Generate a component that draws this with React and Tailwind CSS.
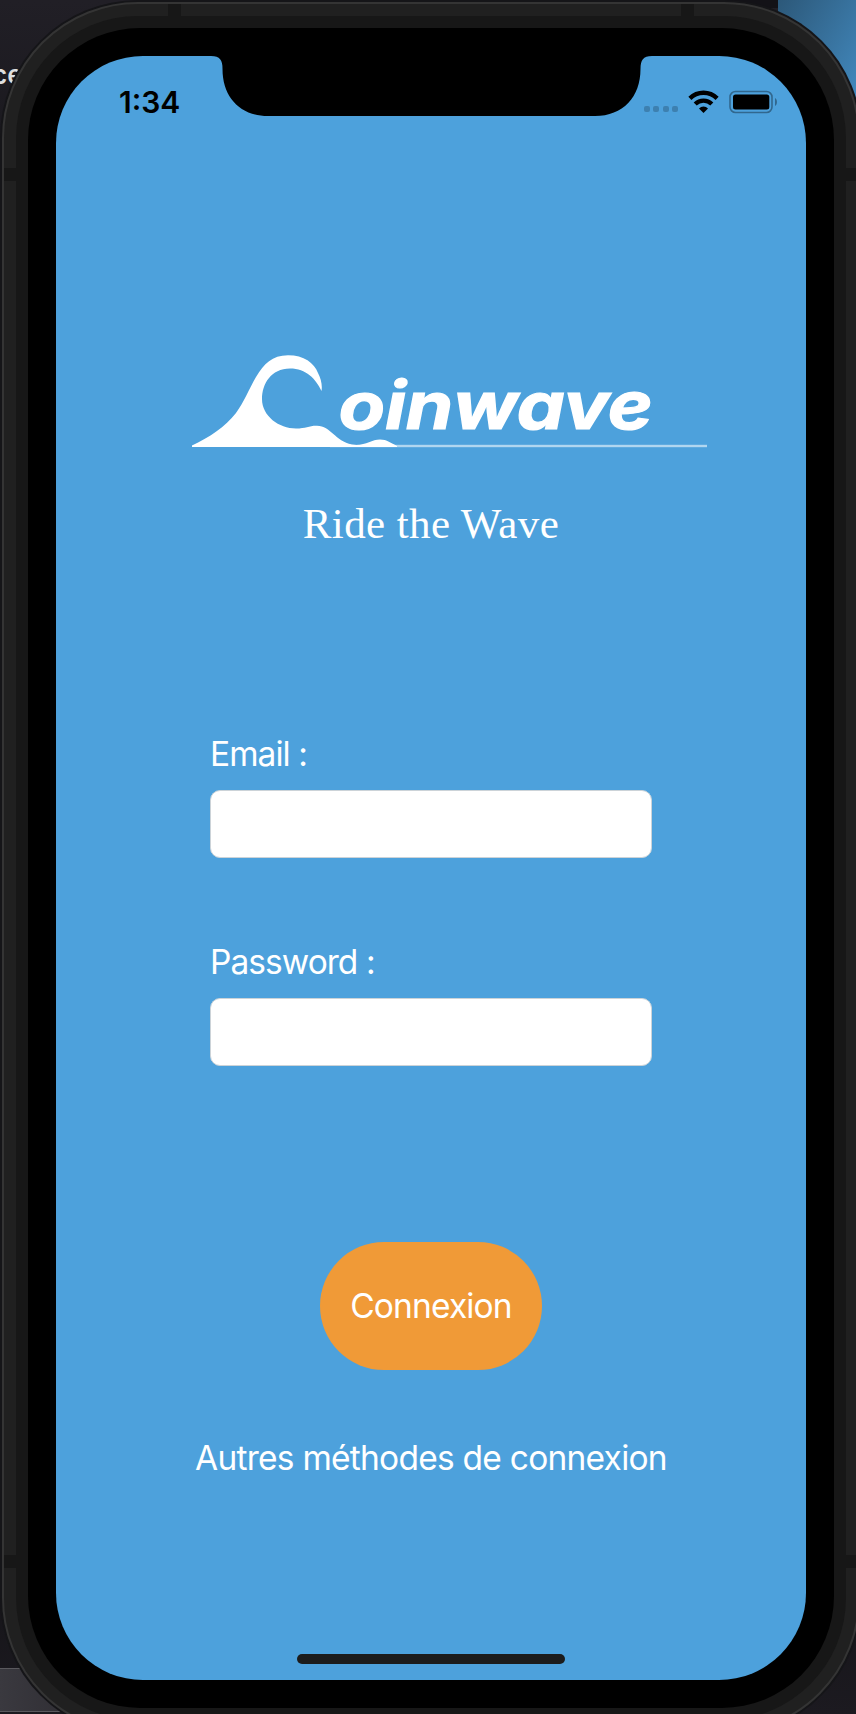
const uiFont = "font-['Inter','Liberation_Sans',sans-serif]";

function Desktop() {
  return (
    <div className="absolute inset-0 flex flex-col justify-between overflow-hidden bg-[#141317]" aria-hidden="true">
      <div className="flex h-[294px]">
        <div className="w-[778px] bg-linear-to-b from-[#211f26] to-[#141317]">
          <div className="ml-[240px] h-2 bg-[#131217]" />
          <p className={`${uiFont} -ml-[8px] mt-[49px] text-[26px] leading-[36px] font-semibold text-[#dedede]`}>
            ce
          </p>
          <div className="mt-[66px] flex w-[2px] flex-col gap-8">
            <div className="h-3 bg-[#5b5b5b]" />
            <div className="h-3 bg-[#5b5b5b]" />
            <div className="h-3 bg-[#4a4a4a]" />
          </div>
        </div>
        <div className="h-[130px] flex-1 bg-linear-to-br from-[#2c5879] to-[#4590c8]" />
      </div>
      <div className="mb-auto flex w-[2px] flex-col">
        <div className="h-[66px] border-y-2 border-[#333]" />
        <div className="mt-[74px] h-[132px] border-y-2 border-[#333]" />
        <div className="mt-[45px] h-[134px] border-y-2 border-[#333]" />
      </div>
      <div className="flex h-[164px] flex-col justify-end bg-linear-to-b from-[#141317] to-[#1c1a20] pb-[2px]">
        <div className="h-[44px] w-[120px] border-y border-[#5a595e] bg-linear-to-r from-[#3a393f] to-[#29272d]" />
      </div>
    </div>
  );
}

function AntennaBands() {
  return (
    <>
      <div className="absolute inset-x-0 top-0 flex justify-between px-[164px]">
        <i className="h-3 w-[13px] bg-[#171717]" />
        <i className="h-3 w-[13px] bg-[#171717]" />
      </div>
      <div className="absolute inset-0 flex justify-between py-[164px]">
        <div className="flex flex-col justify-between">
          <i className="h-[13px] w-3 bg-[#171717]" />
          <i className="h-[13px] w-3 bg-[#171717]" />
        </div>
        <div className="flex flex-col justify-between">
          <i className="h-[13px] w-3 bg-[#171717]" />
          <i className="h-[13px] w-3 bg-[#171717]" />
        </div>
      </div>
    </>
  );
}

function StatusBar() {
  return (
    <header className="flex h-[92px] justify-between pl-[63px] pr-[28px] pt-[31px]">
      <span className={`${uiFont} text-[30px] leading-[30px] font-semibold text-black`}>1:34</span>
      <div className="flex items-start pt-[3px]">
        <div className="mr-[10px] mt-[16px] flex gap-[3.4px]">
          <i className="size-[6px] rounded-[2px] bg-[#3d80b0]" />
          <i className="size-[6px] rounded-[2px] bg-[#3d80b0]" />
          <i className="size-[6px] rounded-[2px] bg-[#3d80b0]" />
          <i className="size-[6px] rounded-[2px] bg-[#3d80b0]" />
        </div>
        <svg className="mr-[10px]" width="31" height="24" viewBox="0 0 31 24">
          <g fill="none" stroke="#000" strokeWidth="4.4">
            <path d="M1.900 8.300a19.500 19.500 0 0 1 27.200 0" />
            <path d="M7.200 14a12 12 0 0 1 16.600 0" />
          </g>
          <path d="M11 18.400a6.400 6.400 0 0 1 9 0L15.500 23z" />
        </svg>
        <svg width="49" height="24" viewBox="0 0 49 24">
          <rect x="1" y="1.500" width="42" height="21" rx="5.5" fill="none" stroke="#31678e" strokeWidth="1.6" />
          <rect x="4" y="4.500" width="36.300" height="15" rx="2.500" />
          <path d="M46 8c2.600 1.300 2.600 6.700 0 8z" fill="#31678e" />
        </svg>
      </div>
    </header>
  );
}

function Notch() {
  return (
    <svg className="absolute left-[155px] top-0" width="441" height="60" viewBox="0 0 441 60">
      <path d="M0 0C9 0 11.500 4 11.500 13C11.500 41 29 60 57 60H384C412 60 429.500 41 429.500 13C429.500 4 432 0 441 0Z" />
    </svg>
  );
}

function Logo() {
  return (
    <svg className="ml-[134px] block" width="520" height="100" viewBox="190 352 520 100" fill="#fff">
      <rect x="330" y="444.800" width="377" height="2.400" fill="#b0d6f0" />
      <path d="M192 447V445.500C210 437 225 427 236 413C244 402 249 389 256 377C264 364 272 355.300 288 355.300C304 355.300 314 363 318 373C321 379 322.500 385 321.500 391C316 379 306 368.500 290 368.500C271 368.500 262 384 262 399C262 416 279 428.500 296 428.500C306 428.500 309 425.500 317 425.700C331 426 335 441 352 444.600C365 446.500 371 439.500 380 439.500C387 439.500 391 443 397 446V447Z" />
      <text
        x="338.500"
        y="429"
        textLength="314"
        lengthAdjust="spacingAndGlyphs"
        className="font-['Inter','Liberation_Sans',sans-serif] text-[66px] font-bold italic [font-feature-settings:'cv11']"
        stroke="#fff"
        strokeWidth="1.200"
      >
        oinwave
      </text>
    </svg>
  );
}

function Field({ label, type }) {
  return (
    <label className="block">
      <span
        className={`${uiFont} block h-[54px] text-[33.500px] leading-[36px] tracking-[-0.95px] whitespace-pre text-white`}
      >
        {label}
      </span>
      <input
        type={type}
        className="block h-[68px] w-[442px] rounded-[10px] border border-[#ccd3d8] bg-white outline-none"
      />
    </label>
  );
}

export default function App() {
  return (
    <div className="relative h-[1714px] w-[856px] overflow-hidden">
      <Desktop />
      <div className="relative ml-[2px] mt-[2px] h-[1732px] w-[858px] rounded-[136px] border-2 border-[#343434] bg-[#202020] p-3 shadow-[0_0_0_2px_#151518]">
        <AntennaBands />
        <div className="relative h-full rounded-[122px] bg-[#171717] p-3">
          <div className="h-full rounded-[112px] bg-black p-7">
            <main className="relative flex h-full flex-col overflow-hidden rounded-[87px] bg-[#4da1dc]">
              <Notch />
              <StatusBar />
              <div className="mt-[204px]">
                <Logo />
              </div>
              <p className="mt-[47px] text-center font-['Liberation_Serif',serif] text-[43px] leading-[50px] tracking-[0.400px] text-white">
                Ride the Wave
              </p>
              <form className="ml-[154px] mt-[187px] flex flex-col gap-[86px]" onSubmit={(e) => e.preventDefault()}>
                <Field label="Email :" type="email" />
                <Field label="Password :" type="password" />
              </form>
              <button
                type="button"
                className={`${uiFont} mt-[176px] h-[128px] w-[222px] self-center rounded-full bg-[#f09a37] text-[33.500px] tracking-[-0.850px] text-white`}
              >
                Connexion
              </button>
              <a
                className={`${uiFont} mt-[67px] self-center text-[33.500px] leading-[42px] tracking-[-0.750px] whitespace-nowrap text-white`}
              >
                Autres méthodes de connexion
              </a>
              <div className="mb-4 mt-auto h-[10px] w-[268px] self-center rounded-full bg-[#1c1c1c]" />
            </main>
          </div>
        </div>
      </div>
    </div>
  );
}
